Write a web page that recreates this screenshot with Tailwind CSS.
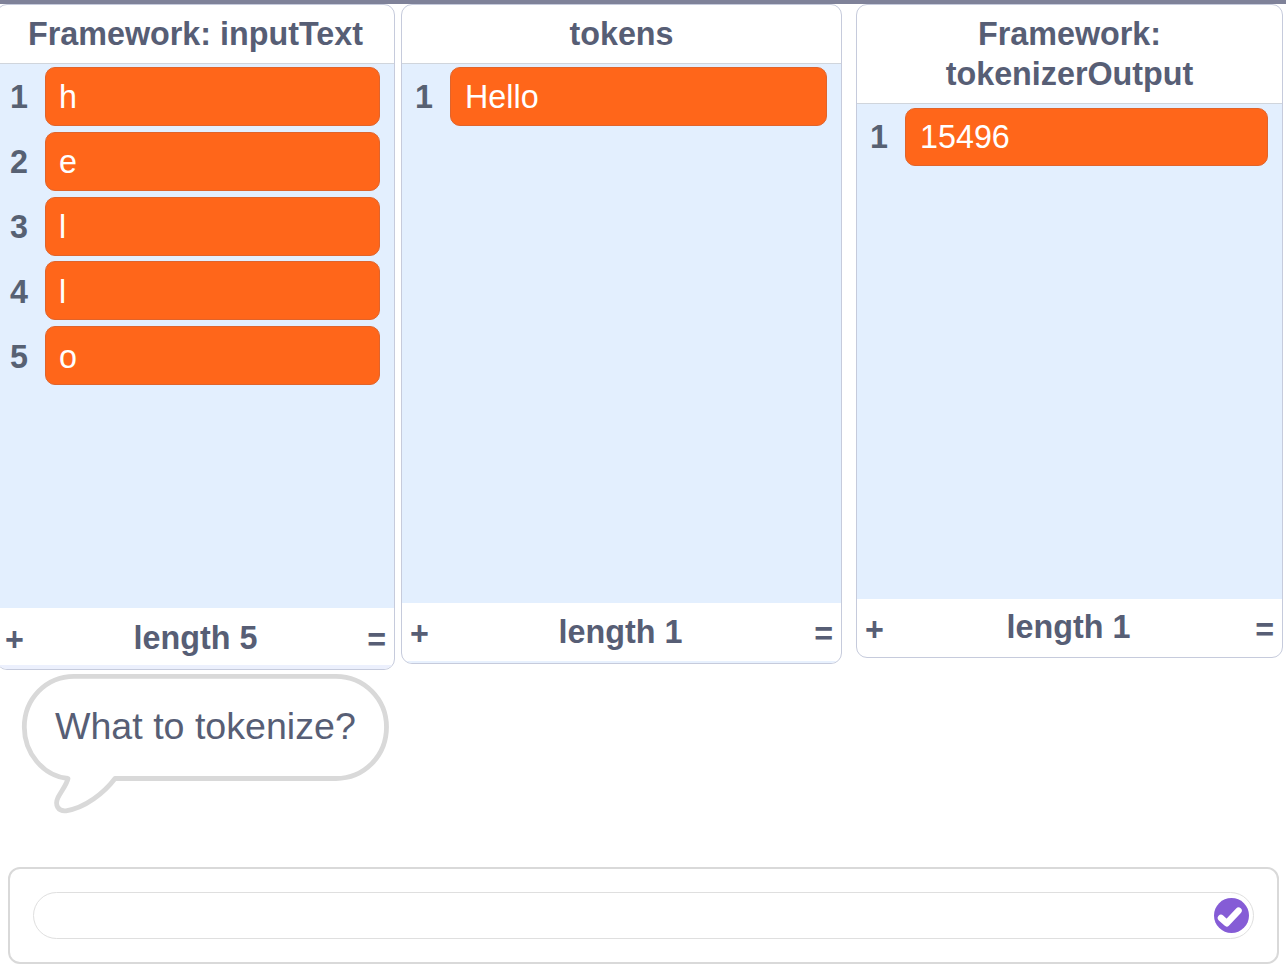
<!DOCTYPE html>
<html lang="en">
<head>
<meta charset="utf-8">
<title>Tokenizer</title>
<script src="https://cdn.jsdelivr.net/npm/@tailwindcss/browser@4"></script>
</head>
<body class="bg-white">
<main class="w-[1286px] h-[966px] overflow-hidden flex flex-col font-['Liberation_Sans',Arial,sans-serif] text-[#575e75] text-[32.3px] leading-[40px]">
  <div class="h-1 shrink-0 bg-[#7f8299]"></div>
  <div class="h-[667px] shrink-0 flex items-start -ml-1">

    <section class="w-[399px] h-[666px] shrink-0 flex flex-col border border-[#c6cbdc] rounded-[11px] overflow-hidden font-bold bg-white">
      <h2 class="h-[59px] shrink-0 pt-[9px] text-center border-b border-[#d0d5dc]">Framework: inputText</h2>
      <ol class="flex-1 bg-[#e3effe] pt-[3px] pr-[14px]">
        <li class="h-[64.8px] flex items-start"><span class="w-[48px] pt-[10px] pr-[17px] text-right text-[#576173]">1</span><span class="flex-1 h-[58.5px] rounded-[10px] border border-[#e0642b] bg-[#ff661a] text-white font-normal pl-[13px] pt-[9px]">h</span></li>
        <li class="h-[64.8px] flex items-start"><span class="w-[48px] pt-[10px] pr-[17px] text-right text-[#576173]">2</span><span class="flex-1 h-[59px] rounded-[10px] border border-[#e0642b] bg-[#ff661a] text-white font-normal pl-[13px] pt-[9px]">e</span></li>
        <li class="h-[64.8px] flex items-start"><span class="w-[48px] pt-[10px] pr-[17px] text-right text-[#576173]">3</span><span class="flex-1 h-[59px] rounded-[10px] border border-[#e0642b] bg-[#ff661a] text-white font-normal pl-[13px] pt-[9px]">l</span></li>
        <li class="h-[64.8px] flex items-start"><span class="w-[48px] pt-[11px] pr-[17px] text-right text-[#576173]">4</span><span class="flex-1 h-[59px] rounded-[10px] border border-[#e0642b] bg-[#ff661a] text-white font-normal pl-[13px] pt-[10px]">l</span></li>
        <li class="h-[64.8px] flex items-start"><span class="w-[48px] pt-[11px] pr-[17px] text-right text-[#576173]">5</span><span class="flex-1 h-[58.5px] rounded-[10px] border border-[#e0642b] bg-[#ff661a] text-white font-normal pl-[13px] pt-[10px]">o</span></li>
      </ol>
      <footer class="h-[61px] shrink-0 flex justify-between px-[8px] pt-[10px] border-b-4 border-[#ecf0fd]"><span class="pt-[2px]">+</span><span>length 5</span><span class="pt-[2px]">=</span></footer>
    </section>

    <section class="ml-[6px] w-[441px] h-[660px] shrink-0 flex flex-col border border-[#c6cbdc] rounded-[11px] overflow-hidden font-bold bg-white">
      <h2 class="h-[59px] shrink-0 pt-[9px] text-center border-b border-[#d0d5dc]">tokens</h2>
      <ol class="flex-1 bg-[#e3effe] pt-[3px] pr-[14px]">
        <li class="h-[64.8px] flex items-start"><span class="w-[48px] pt-[10px] pr-[17px] text-right text-[#576173]">1</span><span class="flex-1 h-[58.5px] rounded-[10px] border border-[#e0642b] bg-[#ff661a] text-white font-normal pl-[14px] pt-[9px]">Hello</span></li>
      </ol>
      <footer class="h-[60px] shrink-0 flex justify-between px-[8px] pt-[9px] border-b-2 border-[#e8f1fe]"><span class="pt-[2px]">+</span><span class="-ml-[2px]">length 1</span><span class="pt-[2px]">=</span></footer>
    </section>

    <section class="ml-[14px] w-[427px] h-[654px] shrink-0 flex flex-col border border-[#c6cbdc] rounded-[11px] overflow-hidden font-bold bg-white">
      <h2 class="h-[99px] shrink-0 pt-[9px] text-center border-b border-[#d0d5dc]">Framework:<br>tokenizerOutput</h2>
      <ol class="flex-1 bg-[#e3effe] pt-[4px] pr-[14px]">
        <li class="h-[64.8px] flex items-start"><span class="w-[48px] pt-[9px] pr-[17px] text-right text-[#576173]">1</span><span class="flex-1 h-[58px] rounded-[10px] border border-[#e0642b] bg-[#ff661a] text-white font-normal pl-[14px] pt-[8px]">15496</span></li>
      </ol>
      <footer class="h-[58px] shrink-0 flex justify-between px-[8px] pt-[8px]"><span class="pt-[3px]">+</span><span class="-ml-[2px]">length 1</span><span class="pt-[3px]">=</span></footer>
    </section>
  </div>

  <!-- speech bubble -->
  <div class="ml-[20px] h-[196px] shrink-0">
    <div class="relative w-[372px] h-[146px]">
      <svg class="absolute inset-0" width="372" height="146" viewBox="20 671 372 146" fill="white" stroke="#d9d9d9" stroke-width="4.8" stroke-linejoin="round"><path d="M68 778.500C43 776 24.300 753 24.300 727C24.300 699 46 676.300 74 676.300H336C364 676.300 386.500 699 386.500 727C386.500 756 364 778.500 336 778.500H115C104 793 85 808 66 810.800C58 811.500 54.500 805 58 797.500C62 790 67 784 68 778.500Z"/></svg>
      <p class="relative pl-[35px] pt-[34px] text-[37.6px] leading-[42px] whitespace-nowrap">What to tokenize?</p>
    </div>
  </div>

  <!-- question prompt -->
  <div class="ml-[8px] w-[1271px] h-[97px] shrink-0 border-2 border-[#d9d9d9] rounded-[12px] px-[23px] pt-[23px]">
    <div class="w-[1221px] h-[47px] rounded-full border border-[#dfdfdf] flex items-center justify-end pr-[4px]">
      <svg width="35" height="35" viewBox="0 0 35 35" fill="none"><circle cx="17.500" cy="17.500" r="17.500" fill="#855cd6"/><path d="M7 20L12.700 25.200L24.500 12.700" stroke="white" stroke-width="6.500" stroke-linecap="round" stroke-linejoin="round"/></svg>
    </div>
  </div>
</main>
</body>
</html>
